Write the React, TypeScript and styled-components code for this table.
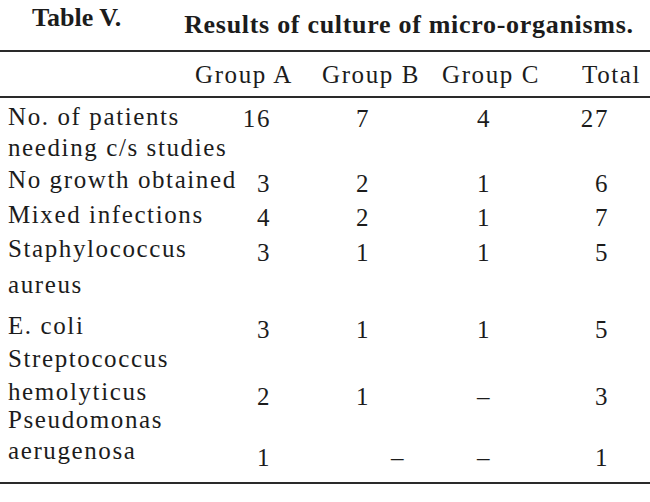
import React from 'react';
import styled, { createGlobalStyle } from 'styled-components';

const GlobalStyle = createGlobalStyle`
  html, body {
    margin: 0;
    padding: 0;
    background: #ffffff;
  }
  body {
    font-family: 'Liberation Serif', 'Times New Roman', serif;
    color: #1c1c1c;
  }
`;

const Page = styled.div`
  width: 650px;
  height: 502px;
  overflow: hidden;
  display: flex;
  flex-direction: column;
`;

const TitleBar = styled.div`
  display: flex;
  align-items: flex-start;
  gap: 63px;
  padding: 3px 0 0 32px;
  font-size: 26px;
  line-height: 30px;
  font-weight: 700;
`;

const TableNo = styled.div``;

const Caption = styled.div`
  margin-top: 7px;
  letter-spacing: 0.7px;
`;

const Rule = styled.div<{ $top: number }>`
  margin-top: ${({ $top }) => $top}px;
  height: 2px;
  background: #2a2a2a;
`;

const HeaderRow = styled.div`
  display: grid;
  grid-template-columns: 195px 127px 120px 140px 1fr;
  margin-top: 7px;
  font-size: 25px;
  line-height: 31px;
  letter-spacing: 1.6px;
  white-space: nowrap;
`;

const HeaderCell = styled.div<{ $col: number }>`
  grid-column: ${({ $col }) => $col + 2};
`;

const Row = styled.div<{ $top?: number; $lead?: number }>`
  display: grid;
  grid-template-columns: 192px 71px 184px 58px 96px;
  row-gap: ${({ $lead }) => $lead ?? 0}px;
  margin-top: ${({ $top }) => $top ?? 0}px;
  padding-left: 8px;
  font-size: 25px;
  line-height: 31px;
  letter-spacing: 1.6px;
  white-space: nowrap;
`;

const Label = styled.div<{ $line: number }>`
  grid-column: 1;
  grid-row: ${({ $line }) => $line + 1};
`;

const aligns = ['right', 'center', 'center', 'right'];

const Value = styled.div<{ $col: number; $line: number; $drop: number; $shift?: number }>`
  grid-column: ${({ $col }) => $col + 2};
  grid-row: ${({ $line }) => $line + 1};
  text-align: ${({ $col }) => aligns[$col]};
  padding-top: ${({ $drop }) => $drop}px;
  margin-bottom: ${({ $drop }) => -$drop}px;
  padding-left: ${({ $shift }) => ($shift ? $shift * 2 : 0)}px;
`;

type Item = {
  lines: string[];
  values: string[];
  at: number;
  top: number;
  lead?: number;
  drop: number;
};

const headers = ['Group A', 'Group B', 'Group C', 'Total'];

const rows: Item[] = [
  { lines: ['No. of patients', 'needing c/s studies'], values: ['16', '7', '4', '27'], at: 0, top: 3, drop: 2 },
  { lines: ['No growth obtained'], values: ['3', '2', '1', '6'], at: 0, top: 1, drop: 4 },
  { lines: ['Mixed infections'], values: ['4', '2', '1', '7'], at: 0, top: 4, drop: 3 },
  { lines: ['Staphylococcus', 'aureus'], values: ['3', '1', '1', '5'], at: 0, top: 3, lead: 5, drop: 4 },
  { lines: ['E. coli'], values: ['3', '1', '1', '5'], at: 0, top: 10, drop: 4 },
  { lines: ['Streptococcus', 'hemolyticus'], values: ['2', '1', '–', '3'], at: 1, top: 2, lead: 2, drop: 5 },
  { lines: ['Pseudomonas', 'aerugenosa'], values: ['1', '–', '–', '1'], at: 1, top: -3, drop: 7 },
];

function App() {
  return (
    <Page>
      <GlobalStyle />
      <TitleBar>
        <TableNo>Table V.</TableNo>
        <Caption>Results of culture of micro-organisms.</Caption>
      </TitleBar>
      <Rule $top={10} />
      <HeaderRow>
        {headers.map((h, i) => (
          <HeaderCell key={h} $col={i}>
            {h}
          </HeaderCell>
        ))}
      </HeaderRow>
      <Rule $top={6} />
      {rows.map((r) => (
        <Row key={r.lines[0]} $top={r.top} $lead={r.lead}>
          {r.lines.map((l, li) => (
            <Label key={l} $line={li}>
              {l}
            </Label>
          ))}
          {r.values.map((v, vi) => (
            <Value
              key={vi}
              $col={vi}
              $line={r.at}
              $drop={r.drop}
              $shift={r.lines[0] === 'Pseudomonas' && vi === 1 ? 35 : 0}
            >
              {v}
            </Value>
          ))}
        </Row>
      ))}
      <Rule $top={16} />
    </Page>
  );
}

export default App;
